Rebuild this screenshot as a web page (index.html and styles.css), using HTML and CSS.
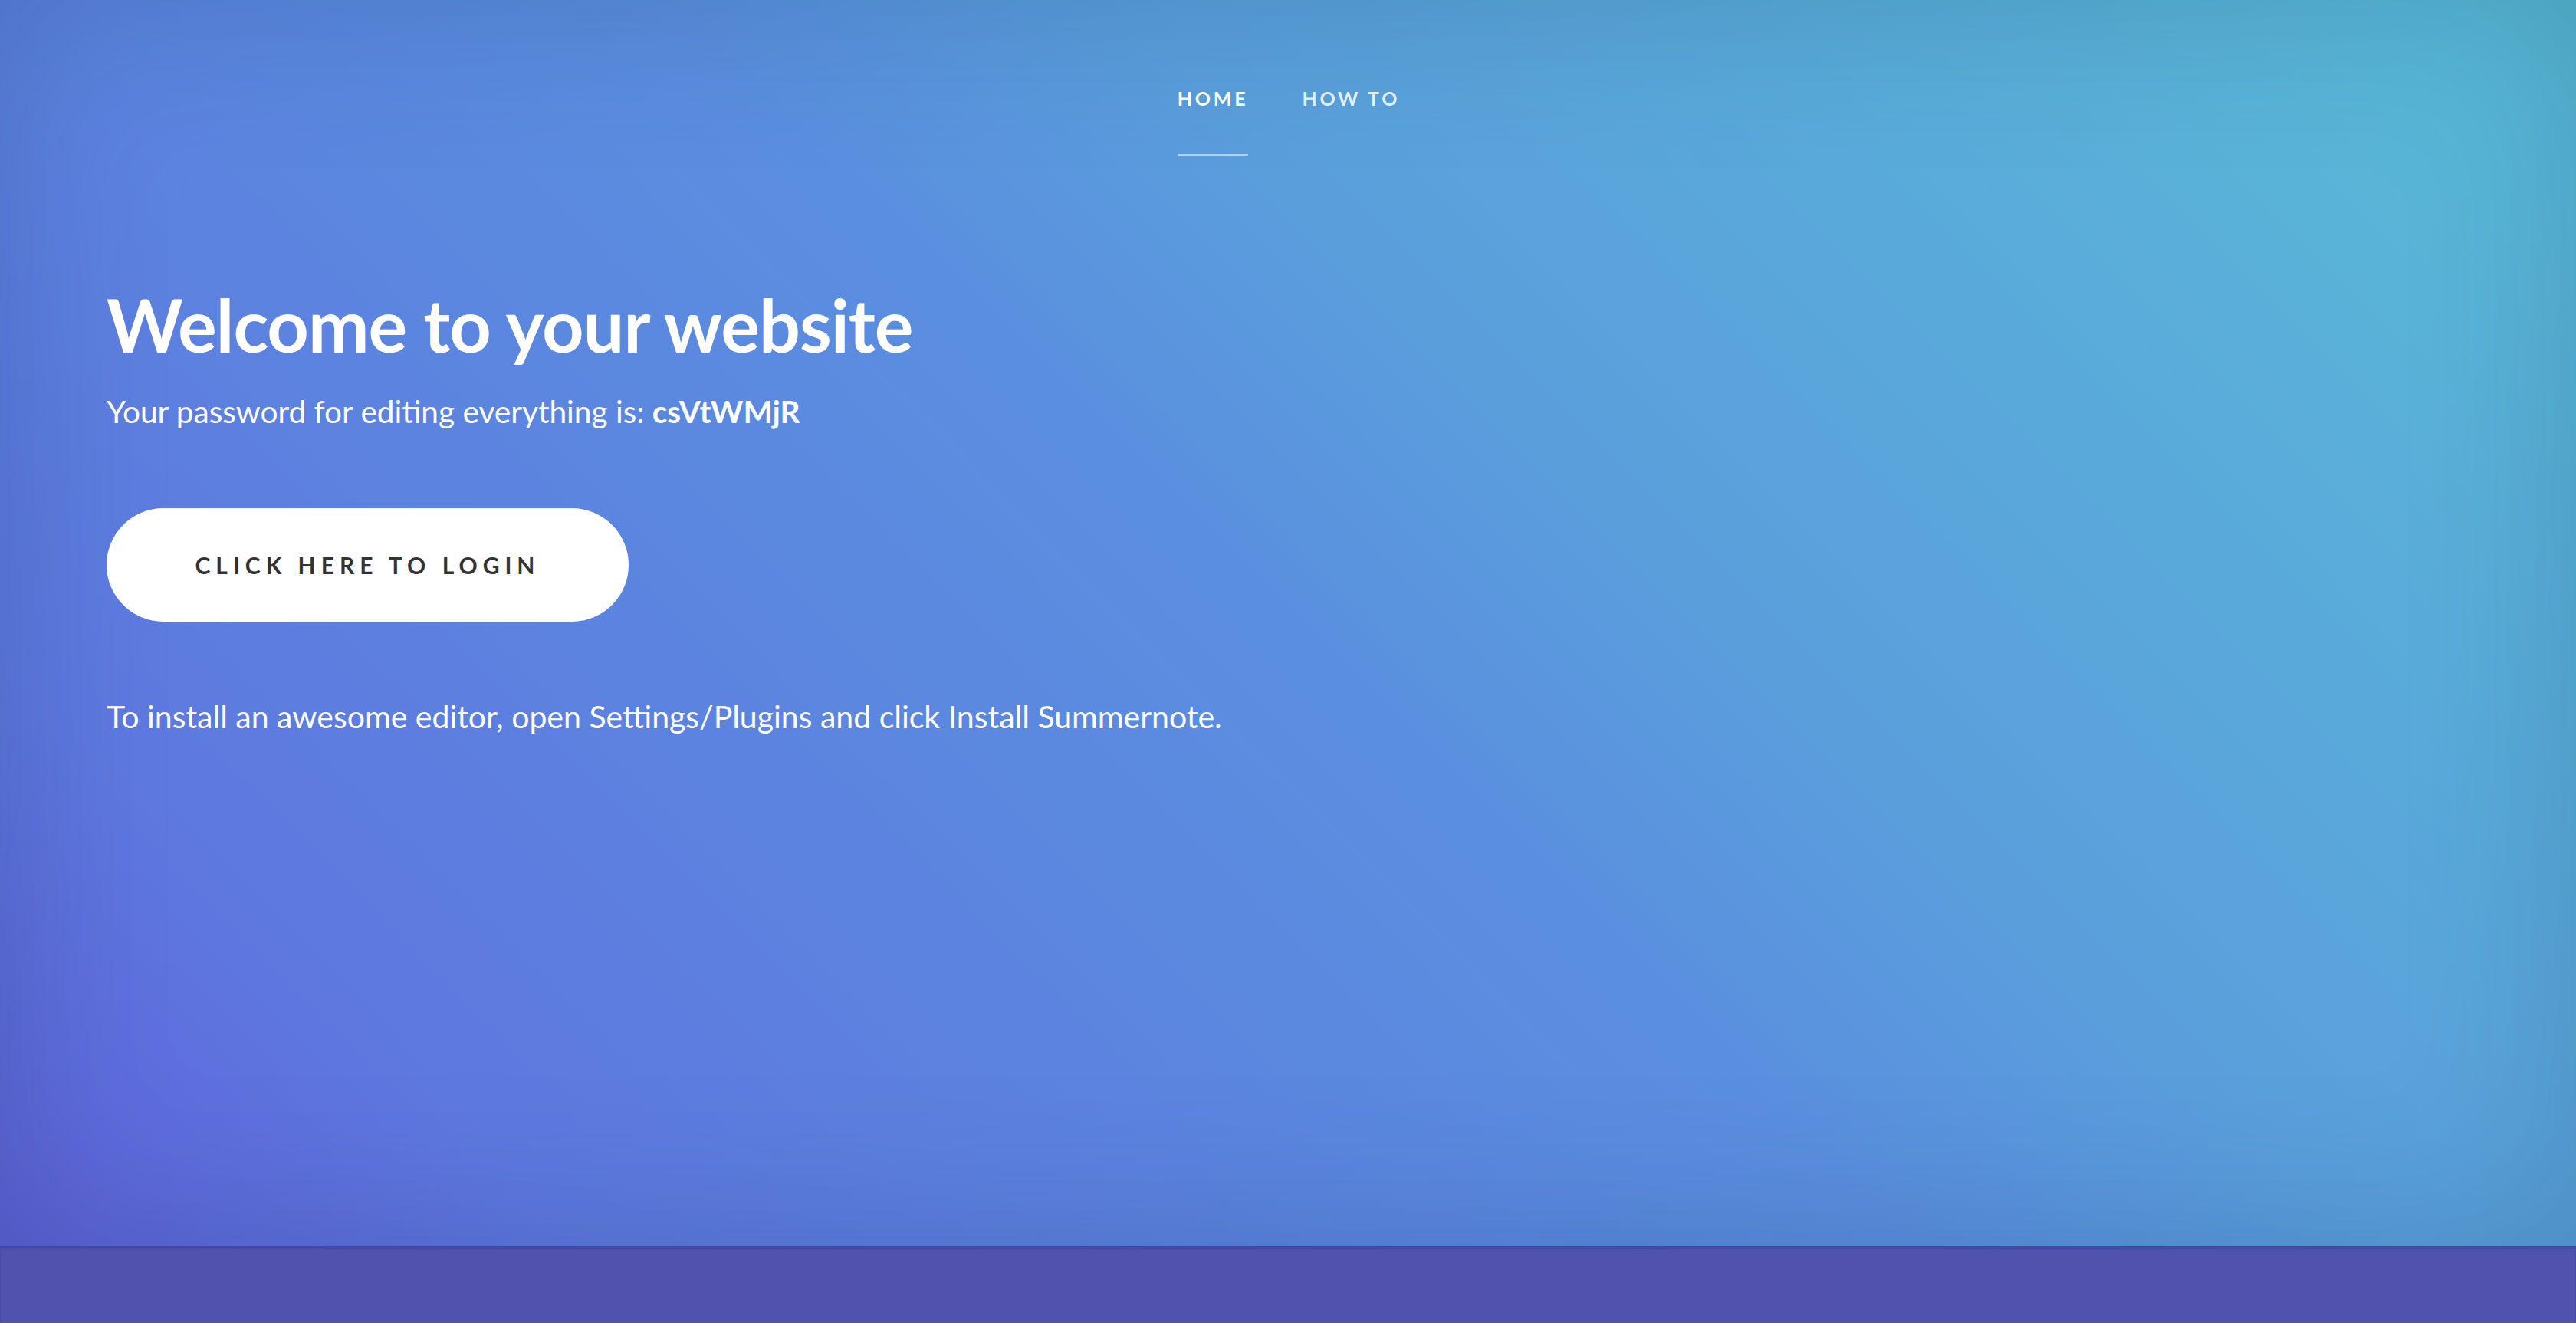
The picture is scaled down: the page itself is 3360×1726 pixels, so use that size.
FILE: index.html
```html
<!DOCTYPE html>
<html lang="en">
<head>
<meta charset="utf-8">
<title>Home</title>
<link rel="stylesheet" href="styles.css">
</head>
<body>
<section class="hero">
  <nav class="nav">
    <a class="nav-link active" href="#">HOME</a>
    <a class="nav-link" href="#">HOW TO</a>
  </nav>
  <div class="content">
    <h1 class="title">Welcome to your website</h1>
    <p class="password">Your password for editing everything is: <b>csVtWMjR</b></p>
    <a class="login-btn" href="#">CLICK HERE TO LOGIN</a>
    <p class="note">To install an awesome editor, open Settings/Plugins and click Install Summernote.</p>
  </div>
</section>
<footer class="footer"></footer>
</body>
</html>
```
FILE: styles.css
```css
html, body {
  margin: 0;
  padding: 0;
  height: 100%;
  overflow: hidden;
}
body {
  font-family: Lato, "Open Sans", sans-serif;
  color: #fff;
  background: #5052ae;
}
.hero {
  height: 1626px;
  background: linear-gradient(45deg, #5e62d8 0%, #5e78e0 15%, #5a8fdf 50%, #5a9fdc 62%, #59b4d8 90%, #57bcd5 100%);
  box-shadow: inset 0 0 220px rgba(20, 50, 90, 0.22);
  display: flex;
  flex-direction: column;
}
.nav {
  display: flex;
  justify-content: center;
  gap: 70px;
  padding-top: 111px;
  padding-left: 2px;
}
.nav-link {
  color: rgba(255, 255, 255, 0.85);
  text-decoration: none;
  font-weight: 700;
  font-size: 25px;
  letter-spacing: 3.8px;
  line-height: 34px;
  padding-bottom: 56px;
  border-bottom: 2px solid transparent;
}
.nav-link.active {
  color: #fff;
  border-bottom-color: rgba(255, 255, 255, 0.55);
}
.content {
  padding-left: 139px;
  display: flex;
  flex-direction: column;
  align-items: flex-start;
}
.title {
  margin: 164px 0 0;
  font-size: 95px;
  font-weight: 700;
  line-height: 112px;
  letter-spacing: -1px;
}
.password {
  margin: 32px 0 0;
  font-size: 40.6px;
  line-height: 52px;
}
.password b {
  font-weight: 700;
}
.login-btn {
  margin-top: 100px;
  width: 681px;
  height: 148px;
  border-radius: 74px;
  background: #fff;
  color: #333;
  text-decoration: none;
  font-weight: 700;
  font-size: 30px;
  letter-spacing: 7px;
  display: flex;
  align-items: center;
  justify-content: center;
  padding-left: 0;
  box-sizing: border-box;
}
.note {
  margin: 98px 0 0;
  font-size: 41px;
  line-height: 52px;
}
.footer {
  height: 100px;
  background: #5052ae;
  box-shadow: inset 0 3px 3px rgba(40, 40, 120, 0.25);
}
```
